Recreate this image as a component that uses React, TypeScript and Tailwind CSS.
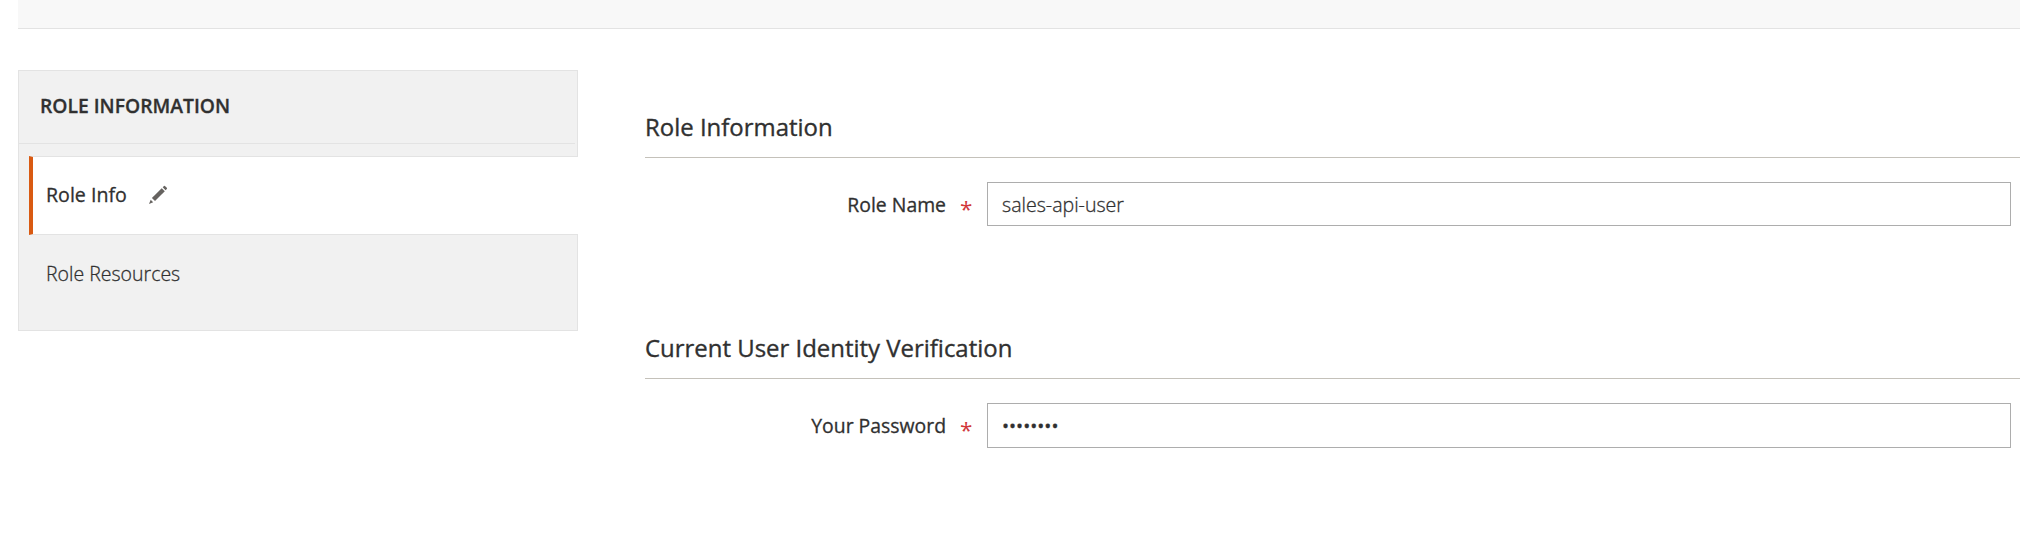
import type { ReactNode } from 'react';

function PencilIcon() {
  return (
    <svg width="20" height="20" viewBox="0 0 20 20" fill="#666360" aria-hidden="true">
      <path d="M13.7 3.2L16.8 6.3L7 16.1L3.9 13Z" />
      <path d="M14.7 2.3L16 1.1Q16.6 .6 17.2 1.2L18.8 2.8Q19.4 3.4 18.8 4L17.6 5.2Z" />
      <path d="M2.7 14.8L5.2 17.3L1 19Z" />
    </svg>
  );
}

function Section({ title, children }: { title: string; children: ReactNode }) {
  return (
    <section className="h-[221px]">
      <h2 className="flex h-[53px] items-start border-b border-[#c4c1ba] pt-[5px] text-[23.95px] leading-[33px] [-webkit-text-stroke:0.35px]">
        {title}
      </h2>
      {children}
    </section>
  );
}

function Field({ label, children }: { label: string; children: ReactNode }) {
  return (
    <div className="flex">
      <div className="flex w-[301px] shrink-0 items-center justify-end">
        <label className="text-[19.4px] leading-[27px] [-webkit-text-stroke:0.3px]">{label}</label>
      </div>
      <span className="ml-[14px] w-[27px] shrink-0 pt-[13px] text-[22.5px] leading-[27px] text-[#d1373b]">*</span>
      <div
        role="textbox"
        aria-label={label}
        className="flex h-full w-[1024px] shrink-0 items-center border border-[#adadad] bg-white pl-[14px]"
      >
        {children}
      </div>
    </div>
  );
}

export default function App() {
  return (
    <div className="flex h-[534px] flex-col overflow-hidden bg-white pl-[18px] font-['Open_Sans',sans-serif] text-[#303030]">
      <div className="h-[29px] shrink-0 border-b border-[#e3e3e3] bg-[#f8f8f8]" />
      <div className="flex pt-[41px]">
        <aside className="h-[261px] w-[560px] shrink-0">
          <div className="h-[86px] border border-b-0 border-[#e3e3e3] bg-[#f1f1f1] pr-[2px]">
            <div className="flex h-[73px] items-center border-b border-[#e3e3e3] pb-[3px] pl-[21px]">
              <strong className="text-[19.3px] leading-[27px] font-semibold [-webkit-text-stroke:0.3px]">ROLE INFORMATION</strong>
            </div>
          </div>
          <div className="flex h-[79px] border-l border-[#e3e3e3] bg-[#f1f1f1] pl-[10px]">
            <div className="flex flex-1 border-y border-l-4 border-y-[#e3e3e3] border-l-[#d95a12] bg-white">
              <a className="flex items-center pb-0.5 pl-[13px] text-[19.6px] leading-[27px] [-webkit-text-stroke:0.3px]">Role Info</a>
              <div className="pt-7 pl-[21px]"><PencilIcon /></div>
            </div>
          </div>
          <div className="h-[96px] border border-t-0 border-[#e3e3e3] bg-[#f1f1f1] pt-[25px] pl-[27px]">
            <a className="text-[19.5px] leading-[27px] font-light [-webkit-text-stroke:0.3px]">Role Resources</a>
          </div>
        </aside>
        <main className="min-w-0 flex-1 pt-[35px] pl-[67px]">
          <Section title="Role Information">
            <div className="grid h-[68px] grid-rows-[44px] pt-6">
              <Field label="Role Name">
                <span className="text-[19.6px] leading-[27px] font-light [-webkit-text-stroke:0.3px]">sales-api-user</span>
              </Field>
            </div>
          </Section>
          <Section title="Current User Identity Verification">
            <div className="grid h-[69px] grid-rows-[45px] pt-6">
              <Field label="Your Password">
                <span className="pt-0.5 text-[18.8px] leading-[27px] [-webkit-text-stroke:0.3px]">••••••••</span>
              </Field>
            </div>
          </Section>
        </main>
      </div>
    </div>
  );
}
